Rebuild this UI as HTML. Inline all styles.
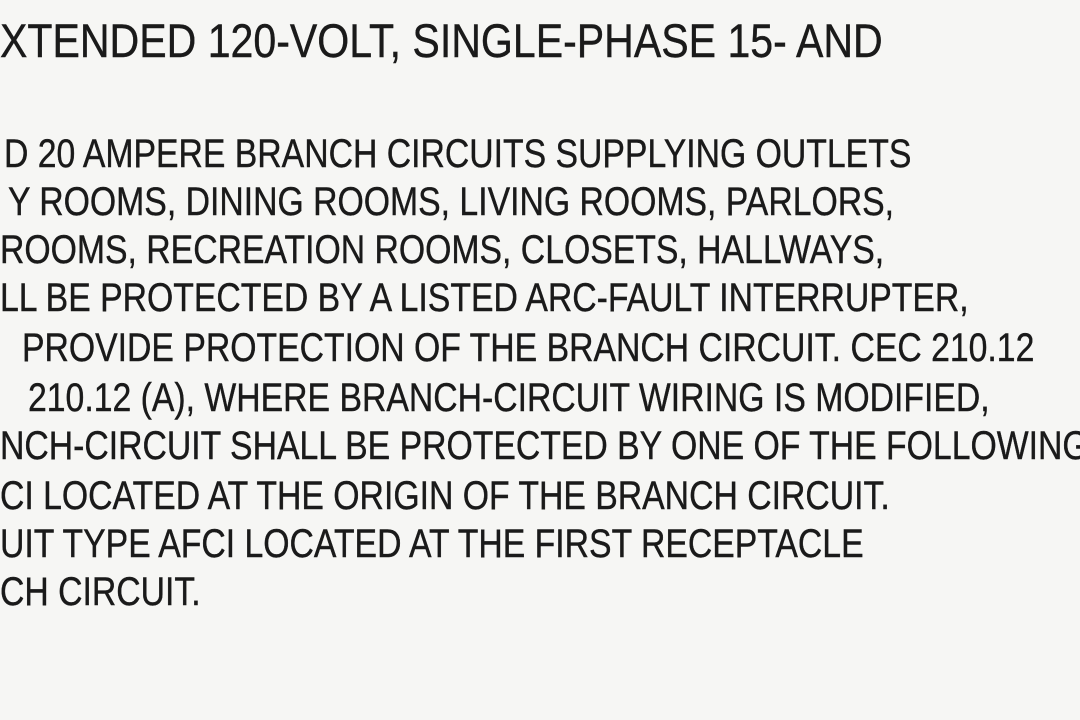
<!DOCTYPE html>
<html><head><meta charset="utf-8"><style>
html,body{margin:0;padding:0;width:1080px;height:720px;overflow:hidden;background:#f6f6f4;}
.l{position:absolute;white-space:nowrap;font-family:"Liberation Sans",Arial,sans-serif;color:#1a1a1a;transform-origin:0 0;transform:scaleX(0.844);line-height:1;-webkit-text-stroke:0.4px #1a1a1a;}
.h{font-size:47px;}
.b{font-size:40px;}
</style></head><body>
<div class="l h" style="left:0;top:17px;transform:scaleX(0.874)">XTENDED 120-VOLT, SINGLE-PHASE 15- AND</div>
<div class="l b" style="left:4px;top:134px">D 20 AMPERE BRANCH CIRCUITS SUPPLYING OUTLETS</div>
<div class="l b" style="left:8px;top:182px">Y ROOMS, DINING ROOMS, LIVING ROOMS, PARLORS,</div>
<div class="l b" style="left:0;top:230px">ROOMS, RECREATION ROOMS, CLOSETS, HALLWAYS,</div>
<div class="l b" style="left:0;top:278px">LL BE PROTECTED BY A LISTED ARC-FAULT INTERRUPTER,</div>
<div class="l b" style="left:22px;top:328px">PROVIDE PROTECTION OF THE BRANCH CIRCUIT. CEC 210.12</div>
<div class="l b" style="left:28px;top:378px">210.12 (A), WHERE BRANCH-CIRCUIT WIRING IS MODIFIED,</div>
<div class="l b" style="left:0;top:426px">NCH-CIRCUIT SHALL BE PROTECTED BY ONE OF THE FOLLOWING</div>
<div class="l b" style="left:0;top:476px">CI LOCATED AT THE ORIGIN OF THE BRANCH CIRCUIT.</div>
<div class="l b" style="left:0;top:524px">UIT TYPE AFCI LOCATED AT THE FIRST RECEPTACLE</div>
<div class="l b" style="left:0;top:572px">CH CIRCUIT.</div>
</body></html>
